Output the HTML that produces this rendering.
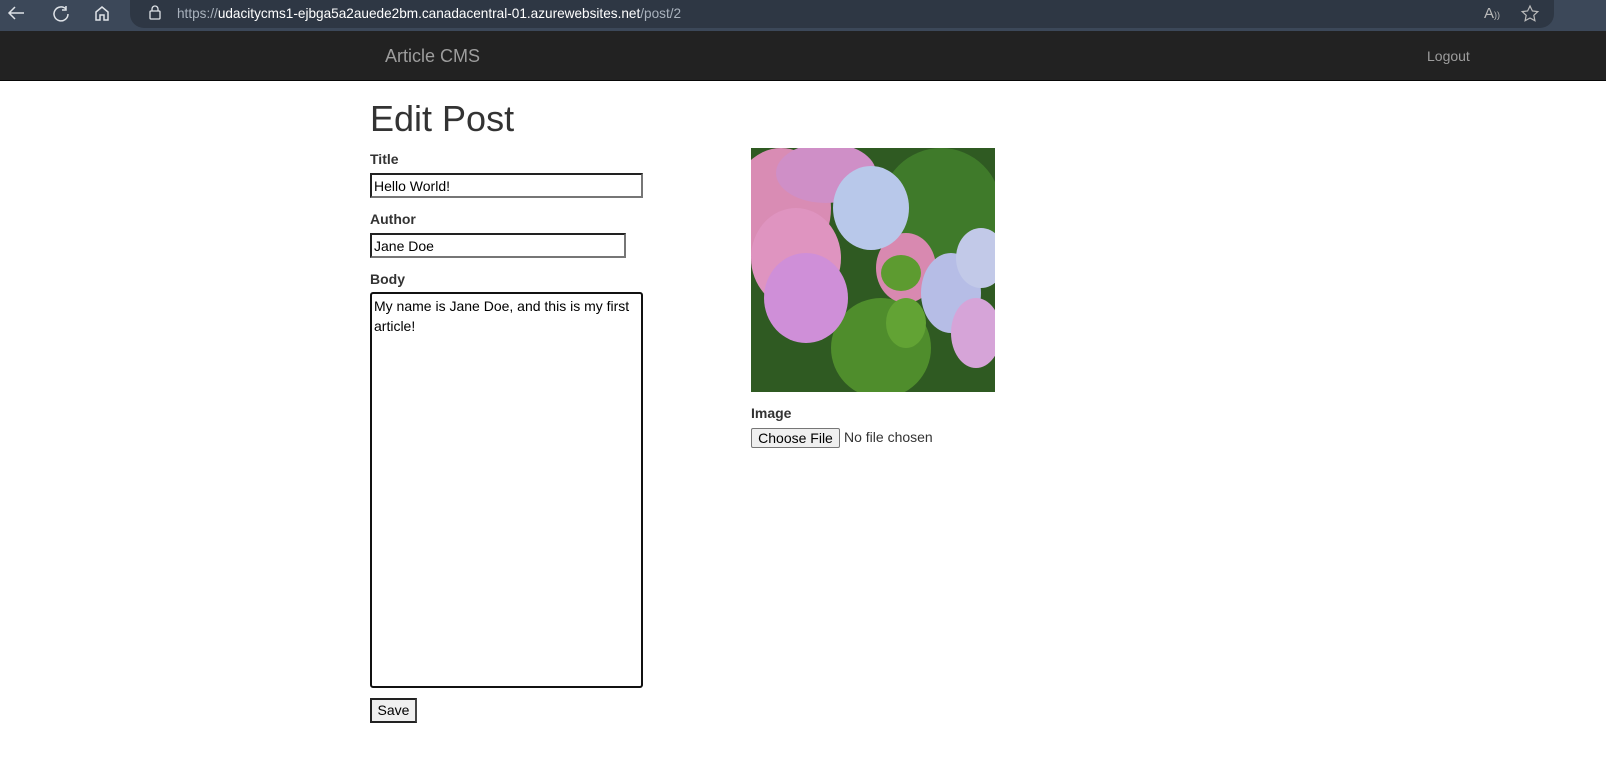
<!DOCTYPE html>
<html><head><meta charset="utf-8"><style>
*{box-sizing:border-box}
body{margin:0;width:1606px;height:757px;overflow:hidden;background:#fff;font-family:"Liberation Sans",Arial,sans-serif;color:#333;position:relative}
.chrome{position:absolute;left:0;top:0;width:1606px;height:31px;background:#3c4859}
.addr{position:absolute;left:130px;top:0;width:1424px;height:28px;background:#2e3744;border-radius:0 0 14px 14px}
.url{position:absolute;left:177px;top:6px;font-size:13.6px;color:#a9b2bd}
.url b{font-weight:normal;color:#fff}
.nav{position:absolute;left:0;top:31px;width:1606px;height:50px;background:#222;border-bottom:1px solid #080808}
.brand{position:absolute;left:385px;top:15px;font-size:18px;color:#9d9d9d}
.logout{position:absolute;left:1427px;top:17px;font-size:14px;color:#9d9d9d}
h1{position:absolute;left:370px;top:98px;margin:0;font-size:36px;font-weight:500;color:#333}
label{position:absolute;font-size:14px;font-weight:bold;color:#333}
.inp{position:absolute;border:2px solid #222;border-right-color:#767676;border-bottom-color:#767676;font-size:14px;color:#000;padding:2px 2px;background:#fff;height:25px;line-height:18px}
.ta{position:absolute;left:370px;top:292px;width:273px;height:396px;border:2px solid #111;border-radius:3px;font-size:14px;color:#000;padding:2px 2px;line-height:20px}
.btn{position:absolute;left:370px;top:698px;width:47px;height:25px;border:2px solid #222;border-right-color:#444;background:#efefef;font-size:14px;color:#000;text-align:center;line-height:21px}
.fbtn{position:absolute;left:751px;top:428px;width:89px;height:20px;border:1px solid #767676;border-radius:2px;background:#efefef;font-size:14px;color:#000;text-align:center;line-height:18px}
.nofile{position:absolute;left:844px;top:429px;font-size:14px;color:#333}
</style></head><body>
<div class="chrome">
<svg width="130" height="31" style="position:absolute;left:0;top:0" fill="none" stroke="#dfe3e8" stroke-width="1.5">
<path d="M24 13H10M15 7l-6 6 6 6"/>
<path d="M66 9a7 7 0 1 0 2 5M66 6v4h-4"/>
<path d="M96 12l6-5 6 5v8h-4v-5h-4v5h-4z"/>
</svg>
<div class="addr"></div>
<svg width="14" height="16" style="position:absolute;left:148px;top:5px" fill="none" stroke="#dfe3e8" stroke-width="1.3"><rect x="2" y="6" width="10" height="8" rx="1"/><path d="M4 6V4a3 3 0 0 1 6 0v2"/></svg>
<div class="url">https://<b>udacitycms1-ejbga5a2auede2bm.canadacentral-01.azurewebsites.net</b>/post/2</div>
<div style="position:absolute;left:1484px;top:5px;font-size:15px;color:#bbb">A<span style="font-size:9px">))</span></div>
<svg width="20" height="20" style="position:absolute;left:1520px;top:4px" fill="none" stroke="#bbb" stroke-width="1.2"><path d="M10 2l2.4 5 5.4.6-4 3.7 1.1 5.4L10 14l-4.9 2.7 1.1-5.4-4-3.7 5.4-.6z"/></svg>
</div>
<div class="nav"><div class="brand">Article CMS</div><div class="logout">Logout</div></div>
<h1>Edit Post</h1>
<label style="left:370px;top:151px">Title</label>
<div class="inp" style="left:370px;top:173px;width:273px">Hello World!</div>
<label style="left:370px;top:211px">Author</label>
<div class="inp" style="left:370px;top:233px;width:256px">Jane Doe</div>
<label style="left:370px;top:271px">Body</label>
<div class="ta">My name is Jane Doe, and this is my first article!</div>
<div class="btn">Save</div>
<svg width="244" height="244" style="position:absolute;left:751px;top:148px" viewBox="0 0 244 244">
<rect width="244" height="244" fill="#2f5a22"/>
<ellipse cx="190" cy="60" rx="60" ry="60" fill="#3f7a2a"/>
<ellipse cx="130" cy="200" rx="50" ry="50" fill="#4f8d2c"/>
<ellipse cx="30" cy="60" rx="50" ry="60" fill="#d98cb4"/>
<ellipse cx="75" cy="25" rx="50" ry="30" fill="#cf8fc7"/>
<ellipse cx="45" cy="110" rx="45" ry="50" fill="#df94c0"/>
<ellipse cx="155" cy="120" rx="30" ry="35" fill="#d889b0"/>
<ellipse cx="120" cy="60" rx="38" ry="42" fill="#b8c8ea"/>
<ellipse cx="55" cy="150" rx="42" ry="45" fill="#cf8fd8"/>
<ellipse cx="200" cy="145" rx="30" ry="40" fill="#b6bde6"/>
<ellipse cx="230" cy="110" rx="25" ry="30" fill="#c2c9e8"/>
<ellipse cx="225" cy="185" rx="25" ry="35" fill="#d6a4d8"/>
<ellipse cx="155" cy="175" rx="20" ry="25" fill="#62a334"/>
<ellipse cx="150" cy="125" rx="20" ry="18" fill="#5d9b30"/>
</svg>
<label style="left:751px;top:405px">Image</label>
<div class="fbtn">Choose File</div>
<div class="nofile">No file chosen</div>
</body></html>
